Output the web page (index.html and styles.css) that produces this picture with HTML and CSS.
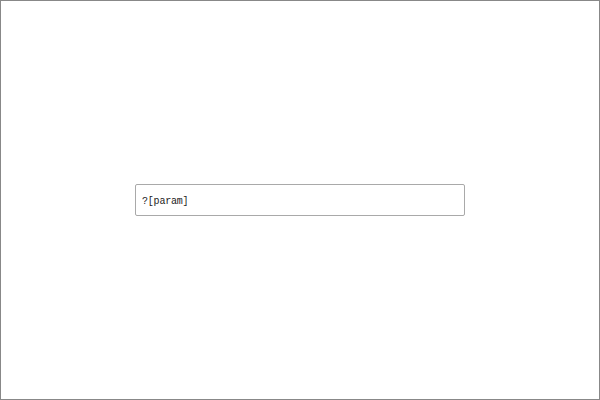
FILE: index.html
```html
<!DOCTYPE html>
<html lang="zh-CN">
<head>
    <meta charset="UTF-8">
    <meta name="viewport" content="width=device-width, initial-scale=1.0">
    <title>param</title>
    <link rel="stylesheet" href="styles.css">
</head>
<body>
    <div class="frame">
        <input class="param-input" type="text" value="?[param]" readonly>
    </div>
</body>
</html>
```
FILE: styles.css
```css
html, body {
    margin: 0;
    padding: 0;
    background-color: #fff;
}
.frame {
    box-sizing: border-box;
    width: 600px;
    height: 400px;
    border: 1px solid #888;
    display: flex;
    align-items: center;
    justify-content: center;
}
.param-input {
    box-sizing: border-box;
    width: 330px;
    height: 32px;
    padding: 2px 6px 0;
    border: 1px solid #a9a9a9;
    border-radius: 2px;
    font-family: "Liberation Mono", "Noto Sans CJK SC", monospace;
    font-size: 10px;
    letter-spacing: -0.2px;
    color: #222;
    background-color: #fff;
    outline: none;
}
```
